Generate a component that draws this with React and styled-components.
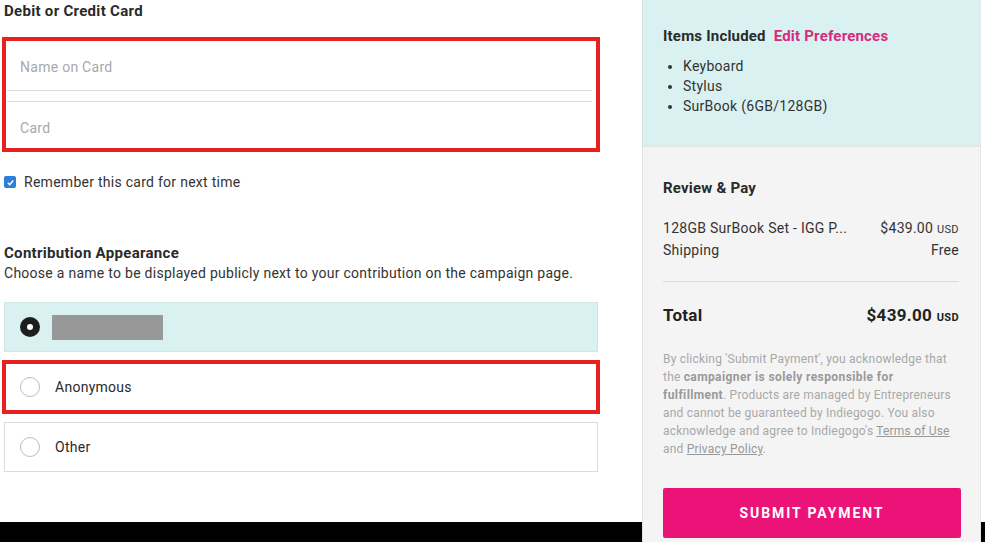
import React from 'react';
import styled, { createGlobalStyle } from 'styled-components';

const GlobalStyle = createGlobalStyle`
    body {
        margin: 0;
        font-family: Roboto, "Liberation Sans", Arial, sans-serif;
        color: #2a2a2a;
        background: #fff;
        letter-spacing: 0.27px;
    }
`;

const App = () => (
    <Page>
        <GlobalStyle />
        <LeftColumn>
            <Heading>Debit or Credit Card</Heading>
            <CardBox>
                <CardField top>Name on Card</CardField>
                <CardField>Card</CardField>
            </CardBox>
            <CheckRow>
                <CheckBox>
                    <svg width="9" height="9" viewBox="0 0 10 10">
                        <path d="M2 5.2 L4.2 7.4 L8 2.8" fill="none" stroke="#fff" strokeWidth="1.7" />
                    </svg>
                </CheckBox>
                Remember this card for next time
            </CheckRow>

            <Section>
                <Heading>Contribution Appearance</Heading>
                <SubText>Choose a name to be displayed publicly next to your contribution on the campaign page.</SubText>
            </Section>

            <Options>
                <Option selected>
                    <Radio checked />
                    <Redacted />
                </Option>
                <Option highlight>
                    <Radio />
                    Anonymous
                </Option>
                <Option>
                    <Radio />
                    Other
                </Option>
            </Options>
        </LeftColumn>

        <Summary>
            <Included>
                <SummaryTitle>
                    Items Included <EditLink>Edit Preferences</EditLink>
                </SummaryTitle>
                <ItemList>
                    <li>Keyboard</li>
                    <li>Stylus</li>
                    <li>SurBook (6GB/128GB)</li>
                </ItemList>
            </Included>
            <Review>
                <SummaryTitle>Review &amp; Pay</SummaryTitle>
                <Lines>
                    <LineRow>
                        <span>128GB SurBook Set - IGG P...</span>
                        <span>$439.00 <Currency>USD</Currency></span>
                    </LineRow>
                    <LineRow>
                        <span>Shipping</span>
                        <span>Free</span>
                    </LineRow>
                </Lines>
                <TotalRow>
                    <span>Total</span>
                    <span>$439.00 <Currency>USD</Currency></span>
                </TotalRow>
                <Legal>
                    By clicking 'Submit Payment', you acknowledge that<br />
                    the <b>campaigner is solely responsible for</b><br />
                    <b>fulfillment</b>. Products are managed by Entrepreneurs<br />
                    and cannot be guaranteed by Indiegogo. You also<br />
                    acknowledge and agree to Indiegogo's <u>Terms of Use</u><br />
                    and <u>Privacy Policy</u>.
                </Legal>
                <SubmitButton>Submit Payment</SubmitButton>
            </Review>
        </Summary>
    </Page>
);

const Page = styled.div`
    display: flex;
    width: 985px;
    height: 542px;
    overflow: hidden;
    background: linear-gradient(to bottom, #fff 522px, #000 522px);
`;

const LeftColumn = styled.div`
    width: 642px;
    padding: 3px 0 0 4px;
    box-sizing: border-box;
    display: flex;
    flex-direction: column;
`;

const Heading = styled.div`
    font-size: 15px;
    font-weight: 700;
    line-height: 16px;
    letter-spacing: 0.3px;
    color: #2a2a2a;
`;

const CardBox = styled.div`
    margin: 18px 0 0 -2px;
    width: 598px;
    box-sizing: border-box;
    border: 4px solid #e8201f;
    padding: 0 4px 0 1px;
    display: flex;
    flex-direction: column;
`;

const CardField = styled.div`
    height: ${p => (p.top ? '50px' : '47px')};
    display: flex;
    align-items: center;
    padding-left: 13px;
    font-size: 14px;
    color: #a9a9a9;
    border-bottom: ${p => (p.top ? '1px solid #d9d9d9' : 'none')};
    border-top: ${p => (p.top ? 'none' : '1px solid #d9d9d9')};
    margin-top: ${p => (p.top ? '0' : '10px')};
    padding-top: ${p => (p.top ? '2px' : '5px')};
    box-sizing: border-box;
`;

const CheckRow = styled.div`
    display: flex;
    align-items: center;
    gap: 8px;
    margin-top: 22px;
    font-size: 14px;
    color: #333;
    line-height: 16px;
`;

const CheckBox = styled.span`
    width: 12px;
    height: 12px;
    border-radius: 2px;
    background: #2b7fd6;
    display: inline-flex;
    align-items: center;
    justify-content: center;
`;

const Section = styled.div`
    margin-top: 55px;
    display: flex;
    flex-direction: column;
    gap: 4px;
`;

const SubText = styled.div`
    font-size: 14px;
    color: #333;
    line-height: 16px;
`;

const Options = styled.div`
    margin-top: 21px;
    width: 594px;
    display: flex;
    flex-direction: column;
    gap: 10px;
`;

const Option = styled.div`
    height: 50px;
    box-sizing: border-box;
    display: flex;
    align-items: center;
    gap: 15px;
    padding-left: 15px;
    font-size: 14px;
    color: #2a2a2a;
    background: ${p => (p.selected ? '#daf1f2' : '#fff')};
    border: 1px solid ${p => (p.selected ? '#d2e6e6' : '#dcdcdc')};
    outline: ${p => (p.highlight ? '4px solid #e8201f' : 'none')};
    outline-offset: -2px;
`;

const Radio = styled.span`
    width: 20px;
    height: 20px;
    border-radius: 50%;
    box-sizing: border-box;
    flex-shrink: 0;
    background: #fff;
    border: ${p => (p.checked ? '7px solid #1e1e1e' : '1px solid #bdbdbd')};
`;

const Redacted = styled.span`
    width: 111px;
    height: 25px;
    margin-left: -3px;
    background: #989898;
`;

const Summary = styled.aside`
    width: 339px;
    height: 542px;
    flex-shrink: 0;
    box-sizing: border-box;
    border-left: 1px solid #e0e0e0;
    border-right: 1px solid #e6e6e6;
    background: #f4f4f4;
    display: flex;
    flex-direction: column;
`;

const Included = styled.div`
    background: #daf1f2;
    border-bottom: 2px solid #e6e6e6;
    padding: 28px 21px 0 20px;
    height: 147px;
    box-sizing: border-box;
`;

const SummaryTitle = styled.div`
    font-size: 15px;
    font-weight: 700;
    line-height: 16px;
    letter-spacing: 0.2px;
    color: #2a2a2a;
`;

const EditLink = styled.span`
    color: #d62c7d;
    margin-left: 4px;
`;

const ItemList = styled.ul`
    margin: 12px 0 0;
    padding-left: 20px;
    font-size: 14px;
    line-height: 20px;
    color: #333;

    li::marker {
        font-size: 13px;
    }
`;

const Review = styled.div`
    padding: 33px 21px 0 20px;
    display: flex;
    flex-direction: column;
`;

const Lines = styled.div`
    margin-top: 24px;
    padding-bottom: 23px;
    border-bottom: 1px solid #dcdcdc;
    display: flex;
    flex-direction: column;
    gap: 4px;
`;

const LineRow = styled.div`
    display: flex;
    justify-content: space-between;
    font-size: 14px;
    line-height: 16px;
    color: #333;
`;

const Currency = styled.span`
    font-size: 11px;
    letter-spacing: 0.4px;
`;

const TotalRow = styled.div`
    display: flex;
    justify-content: space-between;
    margin-top: 24px;
    font-size: 17px;
    font-weight: 700;
    line-height: 18px;
    letter-spacing: 0.3px;
    color: #222;
`;

const Legal = styled.p`
    margin: 23px 0 0;
    font-size: 12px;
    line-height: 18px;
    letter-spacing: 0.2px;
    white-space: nowrap;
    color: #a8a8a8;

    b {
        color: #999;
        letter-spacing: 0.4px;
    }

    u {
        color: #999;
    }
`;

const SubmitButton = styled.button`
    margin-top: 30px;
    height: 50px;
    width: 298px;
    border: none;
    border-radius: 2px;
    background: #ec1378;
    color: #fff;
    font-family: Roboto, "Liberation Sans", Arial, sans-serif;
    font-size: 14px;
    font-weight: 700;
    letter-spacing: 1.9px;
    text-transform: uppercase;
`;

export default App;
